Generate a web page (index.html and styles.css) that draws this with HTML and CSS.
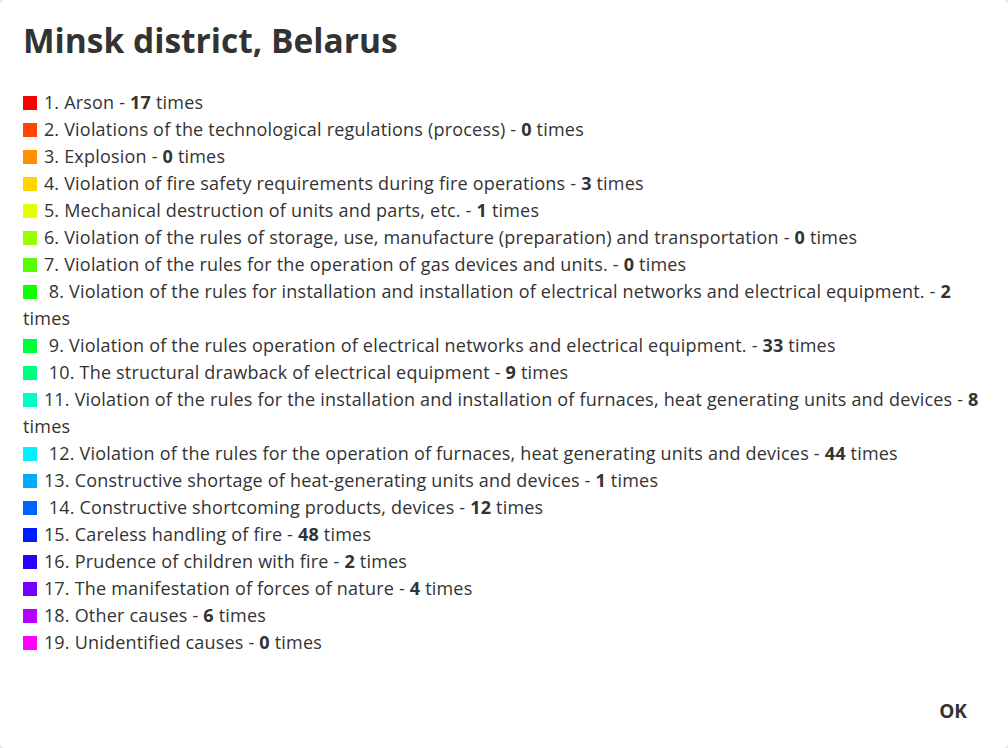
FILE: index.html
```html
<!DOCTYPE html>
<html lang="en">
<head>
<meta charset="utf-8">
<title>Minsk district, Belarus</title>
<link rel="stylesheet" href="styles.css">
</head>
<body>
<div class="dialog">
  <h1 class="title">Minsk district, Belarus</h1>
  <ul class="causes">
    <li><span class="sw c1"></span> 1. Arson - <b>17</b> times</li>
    <li><span class="sw c2"></span> 2. Violations of the technological regulations (process) - <b>0</b> times</li>
    <li><span class="sw c3"></span> 3. Explosion - <b>0</b> times</li>
    <li><span class="sw c4"></span> 4. Violation of fire safety requirements during fire operations - <b>3</b> times</li>
    <li><span class="sw c5"></span> 5. Mechanical destruction of units and parts, etc. - <b>1</b> times</li>
    <li><span class="sw c6"></span> 6. Violation of the rules of storage, use, manufacture (preparation) and transportation - <b>0</b> times</li>
    <li><span class="sw c7"></span> 7. Violation of the rules for the operation of gas devices and units. - <b>0</b> times</li>
    <li><span class="sw c8"></span> &nbsp;8. Violation of the rules for installation and installation of electrical networks and electrical equipment. - <b>2</b> times</li>
    <li><span class="sw c9"></span> &nbsp;9. Violation of the rules operation of electrical networks and electrical equipment. - <b>33</b> times</li>
    <li><span class="sw c10"></span> &nbsp;10. The structural drawback of electrical equipment - <b>9</b> times</li>
    <li><span class="sw c11"></span> 11. Violation of the rules for the installation and installation of furnaces, heat generating units and devices - <b>8</b> times</li>
    <li><span class="sw c12"></span> &nbsp;12. Violation of the rules for the operation of furnaces, heat generating units and devices - <b>44</b> times</li>
    <li><span class="sw c13"></span> 13. Constructive shortage of heat-generating units and devices - <b>1</b> times</li>
    <li><span class="sw c14"></span> &nbsp;14. Constructive shortcoming products, devices - <b>12</b> times</li>
    <li><span class="sw c15"></span> 15. Careless handling of fire - <b>48</b> times</li>
    <li><span class="sw c16"></span> 16. Prudence of children with fire - <b>2</b> times</li>
    <li><span class="sw c17"></span> 17. The manifestation of forces of nature - <b>4</b> times</li>
    <li><span class="sw c18"></span> 18. Other causes - <b>6</b> times</li>
    <li><span class="sw c19"></span> 19. Unidentified causes - <b>0</b> times</li>
  </ul>
  <div class="actions">
    <button class="ok" type="button">OK</button>
  </div>
</div>
</body>
</html>
```
FILE: styles.css
```css
html, body {
  margin: 0;
  padding: 0;
  height: 100%;
}
body {
  background: #e9e7de;
  font-family: "Open Sans", "Liberation Sans", sans-serif;
  color: #333333;
}
.dialog {
  box-sizing: border-box;
  height: 748px;
  background: #ffffff;
  border-radius: 5px;
  padding: 20px 24px 17px 23px;
  display: flex;
  flex-direction: column;
}
.title {
  margin: 0;
  font-size: 33.5px;
  line-height: 40px;
  font-weight: 700;
  color: #333333;
}
.causes {
  list-style: none;
  margin: 29px -4px 0 0;
  padding: 0;
  font-size: 18px;
  line-height: 27px;
  letter-spacing: 0.2px;
}
.causes b {
  font-weight: 700;
}
.sw {
  display: inline-block;
  width: 14px;
  height: 14px;
  margin-right: 2px;
  vertical-align: -1px;
}
.c1 { background: #ff0000; }
.c2 { background: #ff4700; }
.c3 { background: #ff8e00; }
.c4 { background: #ffd500; }
.c5 { background: #e3ff00; }
.c6 { background: #9cff00; }
.c7 { background: #55ff00; }
.c8 { background: #0eff00; }
.c9 { background: #00ff38; }
.c10 { background: #00ff80; }
.c11 { background: #00ffc6; }
.c12 { background: #00f1ff; }
.c13 { background: #00aaff; }
.c14 { background: #0063ff; }
.c15 { background: #001cff; }
.c16 { background: #2a00ff; }
.c17 { background: #7100ff; }
.c18 { background: #b800ff; }
.c19 { background: #ff00ff; }
.actions {
  margin-top: auto;
  display: flex;
  justify-content: flex-end;
}
.ok {
  font-family: "Open Sans", "Liberation Sans", sans-serif;
  font-size: 19px;
  line-height: 24px;
  font-weight: 700;
  color: #333333;
  background: transparent;
  border: 0;
  padding: 8px 16px;
  margin-right: 1px;
  cursor: pointer;
}
```
